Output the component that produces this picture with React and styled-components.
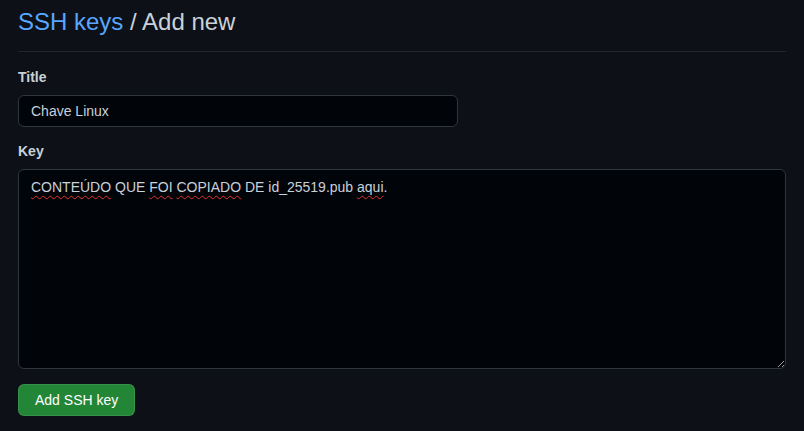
import React from 'react';
import styled, { createGlobalStyle } from 'styled-components';

const GlobalStyle = createGlobalStyle`
  html, body {
    margin: 0;
    background: #0d1117;
    color: #c9d1d9;
    font-family: "Liberation Sans", Arial, sans-serif;
    font-size: 14px;
  }
`;

const Page = styled.div`
  width: 768px;
  padding: 0 18px;
`;

const Header = styled.div`
  display: flex;
  align-items: center;
  box-sizing: border-box;
  height: 52px;
  padding-bottom: 8px;
  margin-bottom: 3px;
  border-bottom: 1px solid #21262d;
`;

const Heading = styled.h2`
  margin: 0;
  font-size: 24px;
  font-weight: 400;
  color: #c9d1d9;
  line-height: 30px;
`;

const Crumb = styled.a`
  color: #58a6ff;
  text-decoration: none;
`;

const Form = styled.form`
  display: flex;
  flex-direction: column;
`;

const Field = styled.div`
  display: flex;
  flex-direction: column;
  margin-top: ${(p) => p.$top}px;
`;

const Label = styled.label`
  font-size: 14px;
  font-weight: 700;
  color: #c9d1d9;
  line-height: 20px;
  margin-bottom: 8px;
`;

const TextInput = styled.input`
  box-sizing: border-box;
  width: 440px;
  height: 32px;
  padding: 5px 12px;
  font-family: inherit;
  font-size: 14px;
  color: #c9d1d9;
  background: #010409;
  border: 1px solid #30363d;
  border-radius: 6px;
  outline: none;
`;

const KeyArea = styled.div`
  box-sizing: border-box;
  width: 768px;
  height: 200px;
  padding: 7px 12px;
  font-size: 14px;
  line-height: 20px;
  color: #c9d1d9;
  background: #010409;
  border: 1px solid #30363d;
  border-radius: 6px;
  overflow: auto;
  resize: vertical;
  color-scheme: dark;
`;

const Misspelled = styled.span`
  text-decoration: underline wavy #e5312c;
  text-decoration-thickness: 1px;
  text-underline-offset: 3px;
`;

const SubmitButton = styled.button`
  align-self: flex-start;
  margin-top: 15px;
  height: 32px;
  padding: 0 16px;
  font-family: inherit;
  font-size: 14px;
  font-weight: 500;
  color: #ffffff;
  background: #238636;
  border: 1px solid rgba(240, 246, 252, 0.1);
  border-radius: 6px;
  cursor: pointer;
`;

export default function App() {
  return (
    <>
      <GlobalStyle />
      <Page>
        <Header>
          <Heading>
            <Crumb href="#">SSH keys</Crumb> / Add new
          </Heading>
        </Header>
        <Form onSubmit={(e) => e.preventDefault()}>
          <Field $top={12}>
            <Label htmlFor="title">Title</Label>
            <TextInput id="title" defaultValue="Chave Linux" spellCheck={false} />
          </Field>
          <Field $top={14}>
            <Label>Key</Label>
            <KeyArea>
              <Misspelled>CONTEÚDO</Misspelled> QUE <Misspelled>FOI</Misspelled>{' '}
              <Misspelled>COPIADO</Misspelled> DE id_25519.pub <Misspelled>aqui</Misspelled>.
            </KeyArea>
          </Field>
          <SubmitButton type="submit">Add SSH key</SubmitButton>
        </Form>
      </Page>
    </>
  );
}
